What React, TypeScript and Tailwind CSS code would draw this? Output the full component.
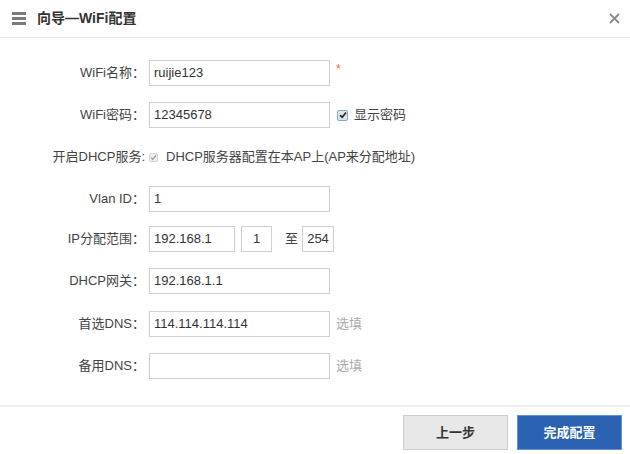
import React from "react";

const font = { fontFamily: '"Liberation Sans", "Noto Sans CJK SC", sans-serif' };

function Field({ value, className = "w-[181px]" }: { value?: string; className?: string }) {
  return (
    <div
      className={`h-[26px] border border-[#cfcfcf] bg-white pl-[4px] flex items-center text-[13px] text-[#333] ${className}`}
    >
      {value}
    </div>
  );
}

function Row({
  label,
  children,
  className = "",
}: {
  label: string;
  children?: React.ReactNode;
  className?: string;
}) {
  return (
    <div className={`flex items-center h-[26px] ${className}`}>
      <div className="w-[149px] pr-[4px] text-right text-[13px] text-[#444] shrink-0 [text-spacing-trim:space-all]">
        {label}
      </div>
      <div className="flex items-center">{children}</div>
    </div>
  );
}

function Hint() {
  return <span className="ml-[6px] text-[13px] text-[#aaa]">选填</span>;
}

export default function App() {
  return (
    <div style={font} className="w-[630px] h-[454px] bg-white flex flex-col overflow-hidden">
      <div className="h-[38px] border-b border-[#e5e5e5] flex items-center px-[12px] shrink-0">
        <div className="flex flex-col gap-[2px] w-[14px] mr-[11px]">
          <span className="block h-[3px] bg-[#7a7a7a]" />
          <span className="block h-[3px] bg-[#7a7a7a]" />
          <span className="block h-[3px] bg-[#7a7a7a]" />
        </div>
        <div className="text-[14px] font-bold text-[#333]">向导—WiFi配置</div>
        <svg className="ml-auto mr-[-2px]" width="11" height="11" viewBox="0 0 11 11">
          <path d="M1 1 L10 10 M10 1 L1 10" stroke="#8a8a8a" strokeWidth="1.8" />
        </svg>
      </div>

      <div className="flex-1 flex flex-col pt-[22px]">
        <Row label="WiFi名称：">
          <Field value="ruijie123" />
          <span className="ml-[6px] -mt-[8px] text-[12px] text-[#f06050]">*</span>
        </Row>

        <Row label="WiFi密码：" className="mt-[16px]">
          <Field value="12345678" />
          <span className="ml-[7px] w-[11px] h-[11px] border border-[#7fa7dc] bg-[#e4e4e4] rounded-[2px] flex items-center justify-center">
            <svg width="8" height="8" viewBox="0 0 8 8">
              <path d="M1 4.2 L3.2 6.3 L7 1.5" stroke="#222" strokeWidth="1.6" fill="none" />
            </svg>
          </span>
          <span className="ml-[6px] text-[13px] text-[#444]">显示密码</span>
        </Row>

        <div className="flex items-center h-[26px] mt-[16px]">
          <div className="w-[145px] text-right text-[13px] text-[#444] shrink-0">开启DHCP服务:</div>
          <span className="ml-[4px] w-[9px] h-[9px] border border-[#d4d4d4] bg-[#f0f0f0] rounded-[2px] flex items-center justify-center">
            <svg width="7" height="7" viewBox="0 0 7 7">
              <path d="M1 3.6 L2.8 5.3 L6 1.3" stroke="#9a9a9a" strokeWidth="1.2" fill="none" />
            </svg>
          </span>
          <span className="ml-[8px] text-[13px] text-[#444]">DHCP服务器配置在本AP上(AP来分配地址)</span>
        </div>

        <Row label="Vlan ID：" className="mt-[16px]">
          <Field value="1" />
        </Row>

        <Row label="IP分配范围：" className="mt-[14px]">
          <Field value="192.168.1" className="w-[86px]" />
          <div className="ml-[6px] w-[31px] h-[26px] border border-[#cfcfcf] flex items-center justify-center text-[13px] text-[#333]">
            1
          </div>
          <span className="ml-[13px] text-[13px] text-[#444]">至</span>
          <div className="ml-[4px] w-[32px] h-[26px] border border-[#cfcfcf] flex items-center justify-center text-[13px] text-[#333]">
            254
          </div>
        </Row>

        <Row label="DHCP网关：" className="mt-[16px]">
          <Field value="192.168.1.1" />
        </Row>

        <Row label="首选DNS：" className="mt-[17px]">
          <Field value="114.114.114.114" />
          <Hint />
        </Row>

        <Row label="备用DNS：" className="mt-[16px]">
          <Field />
          <Hint />
        </Row>
      </div>

      <div className="h-[49px] border-t-2 border-[#f0f0f0] flex items-start justify-end gap-[9px] pr-[8px] pt-[8px] shrink-0">
        <button className="w-[105px] h-[35px] bg-[#e8e8e8] border border-[#cdcdcd] text-[13px] font-bold text-[#333]">
          上一步
        </button>
        <button className="w-[105px] h-[35px] bg-[#2b62b2] border border-[#5d92d8] text-[13px] font-bold text-white">
          完成配置
        </button>
      </div>
    </div>
  );
}
